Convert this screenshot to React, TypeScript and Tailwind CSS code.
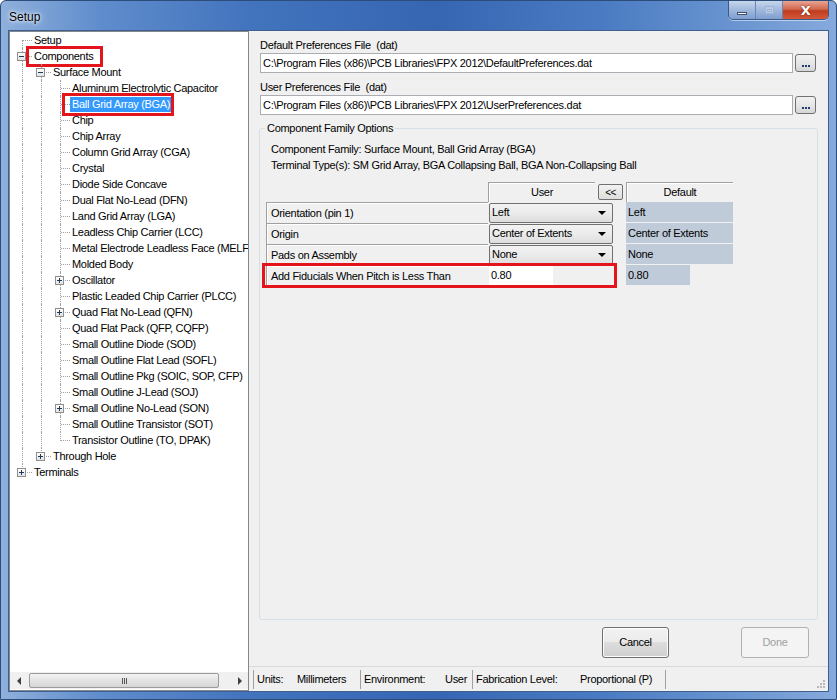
import React from 'react';

type TreeRow = {
  label: string;
  level: number;
  guides: boolean[];
  hasNext: boolean;
  first?: boolean;
  expander?: 'plus' | 'minus';
  selected?: boolean;
  marked?: boolean;
};

const leaves = [
  'Aluminum Electrolytic Capacitor',
  'Ball Grid Array (BGA)',
  'Chip',
  'Chip Array',
  'Column Grid Array (CGA)',
  'Crystal',
  'Diode Side Concave',
  'Dual Flat No-Lead (DFN)',
  'Land Grid Array (LGA)',
  'Leadless Chip Carrier (LCC)',
  'Metal Electrode Leadless Face (MELF)',
  'Molded Body',
  'Oscillator',
  'Plastic Leaded Chip Carrier (PLCC)',
  'Quad Flat No-Lead (QFN)',
  'Quad Flat Pack (QFP, CQFP)',
  'Small Outline Diode (SOD)',
  'Small Outline Flat Lead (SOFL)',
  'Small Outline Pkg (SOIC, SOP, CFP)',
  'Small Outline J-Lead (SOJ)',
  'Small Outline No-Lead (SON)',
  'Small Outline Transistor (SOT)',
  'Transistor Outline (TO, DPAK)',
];

const withChildren = ['Oscillator', 'Quad Flat No-Lead (QFN)', 'Small Outline No-Lead (SON)'];

const rows: TreeRow[] = [
  { label: 'Setup', level: 0, guides: [], hasNext: true, first: true },
  { label: 'Components', level: 0, guides: [], hasNext: true, expander: 'minus', marked: true },
  { label: 'Surface Mount', level: 1, guides: [true], hasNext: true, expander: 'minus' },
  ...leaves.map((label, i) => ({
    label,
    level: 2,
    guides: [true, true],
    hasNext: i < leaves.length - 1,
    expander: withChildren.includes(label) ? ('plus' as const) : undefined,
    selected: label === 'Ball Grid Array (BGA)',
  })),
  { label: 'Through Hole', level: 1, guides: [true], hasNext: false, expander: 'plus' },
  { label: 'Terminals', level: 0, guides: [], hasNext: false, expander: 'plus' },
];

function Expander({ kind }: { kind: 'plus' | 'minus' }) {
  return (
    <div className="absolute left-[4px] top-[4px] w-[9px] h-[9px] border border-[#8f8f8f] bg-[linear-gradient(180deg,#ffffff,#e2e2e2)] flex items-center justify-center">
      <div className="relative w-[5px] h-[5px]">
        <div className="absolute left-0 top-[2px] w-[5px] h-[1px] bg-[#1c3a60]" />
        {kind === 'plus' && <div className="absolute left-[2px] top-0 w-[1px] h-[5px] bg-[#1c3a60]" />}
      </div>
    </div>
  );
}

function TreeLine({ row }: { row: TreeRow }) {
  return (
    <div className="flex h-[16px] items-center">
      {row.guides.map((g, i) => (
        <div key={i} className="relative w-[19px] h-[16px] shrink-0">
          {g && <div className="absolute left-[9px] top-0 h-[16px] border-l border-dotted border-[#a0a0a0]" />}
        </div>
      ))}
      <div className="relative w-[19px] h-[16px] shrink-0">
        <div
          className={
            row.first
              ? 'absolute left-[9px] top-[8px] h-[8px] border-l border-dotted border-[#a0a0a0]'
              : row.hasNext
              ? 'absolute left-[9px] top-0 h-[16px] border-l border-dotted border-[#a0a0a0]'
              : 'absolute left-[9px] top-0 h-[9px] border-l border-dotted border-[#a0a0a0]'
          }
        />
        <div className="absolute left-[10px] top-[8px] w-[9px] border-t border-dotted border-[#a0a0a0]" />
        {row.expander && <Expander kind={row.expander} />}
      </div>
      <span
        className={
          'relative whitespace-nowrap px-[2px] leading-[15px] ' +
          (row.selected ? 'bg-[#3399ff] text-white' : 'text-black')
        }
      >
        {row.label}
        {row.marked && (
          <span className="absolute -left-[6px] -top-[3px] -right-[8px] -bottom-[3px] border-[3px] border-[#e3141b]" />
        )}
        {row.selected && (
          <span className="absolute -left-[8px] -top-[4px] -right-[2px] -bottom-[4px] border-[3px] border-[#e3141b]" />
        )}
      </span>
    </div>
  );
}

function ScrollArrow({ dir }: { dir: 'left' | 'right' }) {
  return (
    <div className="w-[17px] h-[17px] flex items-center justify-center">
      <div
        className={
          dir === 'left'
            ? 'w-0 h-0 border-y-[4px] border-y-transparent border-r-[4px] border-r-[#404040]'
            : 'w-0 h-0 border-y-[4px] border-y-transparent border-l-[4px] border-l-[#404040]'
        }
      />
    </div>
  );
}

function TreePanel() {
  return (
    <div className="w-[240px] shrink-0 bg-white border border-[#828790] flex flex-col">
      <div className="flex-1 pl-[3px] overflow-hidden">
        {rows.map((r) => (
          <TreeLine key={r.label} row={r} />
        ))}
      </div>
      <div className="h-[17px] mb-[1px] flex items-center bg-[#f0f0f0]">
        <ScrollArrow dir="left" />
        <div className="h-[15px] w-[190px] ml-[2px] rounded-[2px] border border-[#9a9a9a] bg-[linear-gradient(180deg,#f3f3f3,#e4e4e4_50%,#d5d5d5)] flex items-center justify-center">
          <div className="flex gap-[1px]">
            <div className="w-[1px] h-[6px] bg-[#555]" />
            <div className="w-[1px] h-[6px] bg-[#555]" />
            <div className="w-[1px] h-[6px] bg-[#555]" />
          </div>
        </div>
        <div className="flex-1" />
        <ScrollArrow dir="right" />
      </div>
    </div>
  );
}

function PathInput({ value }: { value: string }) {
  return (
    <div className="flex items-center gap-[2px] mt-[1px]">
      <div className="flex-1 h-[20px] bg-white border border-[#abadb3] pl-[2px] flex items-center whitespace-nowrap">
        {value}
      </div>
      <div className="w-[21px] h-[18px] rounded-[3px] border border-[#707070] bg-[linear-gradient(180deg,#f2f2f2,#e6e6e6_50%,#d6d6d6)] flex items-end justify-center pb-[4px]">
        <div className="flex gap-[1px]">
          <div className="w-[2px] h-[2px] bg-[#233b70]" />
          <div className="w-[2px] h-[2px] bg-[#233b70]" />
          <div className="w-[2px] h-[2px] bg-[#233b70]" />
        </div>
      </div>
    </div>
  );
}

function Dropdown({ value }: { value: string }) {
  return (
    <div className="ml-[1px] w-[124px] h-[20px] rounded-[2px] border border-[#707070] bg-[linear-gradient(180deg,#f2f2f2,#ebebeb_50%,#dddddd)] flex items-center pl-[2px] pr-[6px]">
      <span className="flex-1">{value}</span>
      <div className="w-0 h-0 border-x-[4px] border-x-transparent border-t-[4px] border-t-black" />
    </div>
  );
}

const cellLabel =
  'w-[222px] h-[21px] border-l border-t border-[#a0a0a0] shadow-[inset_1px_1px_0_#ffffff] flex items-center pl-[4px]';
const defaultCell = 'ml-[13px] w-[107px] h-[20px] bg-[#bfcbd9] flex items-center pl-[2px] mb-[1px]';

function OptionsTable() {
  const opts = [
    { label: 'Orientation (pin 1)', value: 'Left' },
    { label: 'Origin', value: 'Center of Extents' },
    { label: 'Pads on Assembly', value: 'None' },
  ];
  return (
    <div className="ml-[6px] mt-[9px]">
      <div className="flex items-center h-[20px]">
        <div className="w-[222px]" />
        <div className="w-[107px] h-[20px] border-l border-t border-[#a0a0a0] shadow-[inset_1px_1px_0_#ffffff] flex items-center justify-center">
          User
        </div>
        <div className="ml-[3px] w-[25px] h-[16px] rounded-[2px] border border-[#707070] bg-[linear-gradient(180deg,#f2f2f2,#dedede)] flex items-center justify-center text-[10px] tracking-[-0.5px]">
          {'<<'}
        </div>
        <div className="ml-[3px] w-[107px] h-[20px] border-l border-t border-[#a0a0a0] shadow-[inset_1px_1px_0_#ffffff] flex items-center justify-center">
          Default
        </div>
      </div>
      {opts.map((o) => (
        <div key={o.label} className="flex items-center h-[21px]">
          <div className={cellLabel}>{o.label}</div>
          <Dropdown value={o.value} />
          <div className={defaultCell}>{o.value}</div>
        </div>
      ))}
      <div className="relative flex items-center h-[21px]">
        <div className={cellLabel}>Add Fiducials When Pitch is Less Than</div>
        <div className="ml-[1px] w-[64px] h-[19px] bg-white flex items-center pl-[2px]">0.80</div>
        <div className="ml-[73px] w-[64px] h-[20px] bg-[#bfcbd9] flex items-center pl-[2px] mb-[1px]">0.80</div>
        <div className="absolute -left-[4px] -top-[2px] w-[355px] h-[25px] border-[3px] border-[#e3141b]" />
      </div>
    </div>
  );
}

function StatusBar() {
  return (
    <div className="h-[25px] mt-[8px] border-t border-[#dadada] flex items-center pl-[4px]">
      <div className="w-[107px] h-[19px] border-l border-[#a0a0a0] flex items-center pl-[3px]">
        <span className="w-[40px]">Units:</span>
        <span>Millimeters</span>
      </div>
      <div className="w-[112px] h-[19px] border-l border-[#a0a0a0] flex items-center pl-[3px]">
        <span className="w-[81px]">Environment:</span>
        <span>User</span>
      </div>
      <div className="w-[194px] h-[19px] border-l border-r border-[#a0a0a0] flex items-center pl-[3px]">
        <span className="w-[104px]">Fabrication Level:</span>
        <span>Proportional (P)</span>
      </div>
      <div className="flex-1" />
      <div className="self-end mb-[3px] mr-[3px] grid grid-cols-3 gap-[1px]">
        <div />
        <div />
        <div className="w-[2px] h-[2px] bg-[#b8b8b8]" />
        <div />
        <div className="w-[2px] h-[2px] bg-[#b8b8b8]" />
        <div className="w-[2px] h-[2px] bg-[#b8b8b8]" />
        <div className="w-[2px] h-[2px] bg-[#b8b8b8]" />
        <div className="w-[2px] h-[2px] bg-[#b8b8b8]" />
        <div className="w-[2px] h-[2px] bg-[#b8b8b8]" />
      </div>
    </div>
  );
}

function CaptionButtons() {
  return (
    <div className="flex h-[19px] mr-[7px] rounded-b-[5px] border border-t-0 border-[#3a5a8a] overflow-hidden shadow-[0_1px_0_rgba(255,255,255,0.5)]">
      <div className="w-[27px] bg-[linear-gradient(180deg,#c6d6ec,#9fb8dc_50%,#7f9ed0)] border-r border-[#6a86b5] flex items-center justify-center">
        <div className="w-[10px] h-[3px] mt-[6px] bg-white border border-[#3b4f6c]" />
      </div>
      <div className="w-[27px] bg-[linear-gradient(180deg,#c6d6ec,#9fb8dc_50%,#7f9ed0)] border-r border-[#6a86b5] flex items-center justify-center">
        <div className="w-[9px] h-[8px] border border-[#9fb3d2] bg-[#b9cbe6] flex items-center justify-center">
          <div className="w-[5px] h-[3px] border border-[#9fb3d2]" />
        </div>
      </div>
      <div className="w-[45px] bg-[linear-gradient(180deg,#e8a493,#d2694f_45%,#c03c1e_55%,#d4593c)] flex items-center justify-center">
        <span className="text-white font-bold text-[13px] leading-none [text-shadow:0_0_2px_#5a1a10] font-['DejaVu_Sans',sans-serif]">
          X
        </span>
      </div>
    </div>
  );
}

export default function App() {
  return (
    <div className="w-[837px] h-[700px] flex flex-col rounded-t-[6px] border border-[#2c4c7a] bg-[linear-gradient(90deg,#8fb0dc_0%,#5f8ccc_12%,#4273bd_30%,#3666b2_52%,#4a7bc2_72%,#6e98d2_90%,#86aadc_100%)] font-['Liberation_Sans',Arial,sans-serif] text-[11px] tracking-[-0.3px] text-black overflow-hidden">
      <div className="h-[29px] flex items-start justify-between shrink-0">
        <div className="pl-[8px] pt-[7px] text-[12px] tracking-normal text-black [text-shadow:0_0_6px_#ffffff,0_0_3px_#ffffff]">
          Setup
        </div>
        <CaptionButtons />
      </div>
      <div className="flex-1 flex px-[7px] pb-[7px] min-h-0">
        <div className="flex-1 flex border border-[#3f5f8f] bg-[#f0f0f0] min-h-0">
          <TreePanel />
          <div className="flex-1 flex flex-col min-w-0">
            <div className="pl-[11px] pr-[12px] pt-[8px]">
              <div className="leading-[13px]">Default Preferences File&nbsp; (dat)</div>
              <PathInput value={'C:\\Program Files (x86)\\PCB Libraries\\FPX 2012\\DefaultPreferences.dat'} />
              <div className="leading-[13px] mt-[8px]">User Preferences File&nbsp; (dat)</div>
              <PathInput value={'C:\\Program Files (x86)\\PCB Libraries\\FPX 2012\\UserPreferences.dat'} />
            </div>
            <div className="relative ml-[10px] mr-[10px] mt-[13px] h-[495px] border border-[#d5dfe5] rounded-[3px]">
              <div className="absolute left-[5px] -top-[7px] bg-[#f0f0f0] px-[2px] leading-[13px]">
                Component Family Options
              </div>
              <div className="pl-[11px] pt-[12px] leading-[16px]">
                <div>Component Family: Surface Mount, Ball Grid Array (BGA)</div>
                <div>Terminal Type(s): SM Grid Array, BGA Collapsing Ball, BGA Non-Collapsing Ball</div>
              </div>
              <OptionsTable />
            </div>
            <div className="flex justify-end items-center mt-[7px] pr-[19px]">
              <div className="w-[67px] h-[31px] rounded-[3px] border border-[#707070] bg-[linear-gradient(180deg,#f2f2f2,#ebebeb_50%,#dddddd_50%,#cfcfcf)] flex items-center justify-center shadow-[inset_0_0_0_1px_#fcfcfc]">
                Cancel
              </div>
              <div className="ml-[72px] w-[68px] h-[31px] rounded-[3px] border border-[#adb2b5] bg-[#f4f4f4] flex items-center justify-center text-[#a0a0a0]">
                Done
              </div>
            </div>
            <div className="flex-1" />
            <StatusBar />
          </div>
        </div>
      </div>
    </div>
  );
}
